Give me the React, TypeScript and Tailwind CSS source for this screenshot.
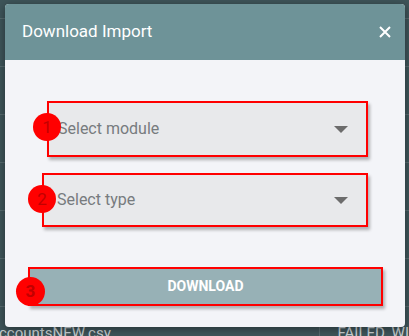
import React from 'react'

const rows = [0, 1, 2, 3, 4, 5]

function Marker({ n, className }: { n: number; className: string }) {
  return (
    <div
      className={`absolute flex h-[28px] w-[28px] items-center justify-center rounded-full bg-[#ff0000] text-[17px] leading-none text-[#c20000] ${className}`}
    >
      {n}
    </div>
  )
}

function SelectField({ label, className, marker }: { label: string; className: string; marker: React.ReactNode }) {
  return (
    <div
      className={`relative flex items-center justify-between border-2 border-[#ff0000] bg-[#e8e9eb] pr-[18px] shadow-[2px_3px_3px_rgba(0,0,0,0.28)] ${className}`}
    >
      {marker}
      <span className="text-[16px] text-[#777b7e]">{label}</span>
      <span className="h-0 w-0 border-x-[7px] border-t-[7px] border-x-transparent border-t-[#6c6c6c]" />
    </div>
  )
}

export default function App() {
  return (
    <div className="relative h-[336px] w-[409px] overflow-hidden bg-[#3e5459] font-['Roboto','Liberation_Sans',sans-serif]">
      {/* table behind the modal */}
      <div className="flex flex-col">
        <div className="h-[19px] border-b border-[#566a6e]" />
        {rows.map((r) => (
          <div key={r} className="flex h-[48px] border-b border-[#566a6e]">
            <div className="w-[323px] border-r border-[#566a6e]" />
          </div>
        ))}
        <div className="flex h-[40px] items-start text-[15px] leading-none text-[#c9d1d3]">
          <span className="-ml-[1px] w-[323px] border-r border-[#566a6e] pt-[19px]">ccountsNEW.csv</span>
          <span className="pl-[17px] pt-[19px]">FAILED_WI</span>
        </div>
      </div>

      {/* modal */}
      <div className="absolute left-[5px] top-[4px] flex h-[323px] w-[400px] flex-col overflow-hidden rounded-[4px] bg-[#f3f4f8] shadow-[0_2px_8px_rgba(0,0,0,0.4)]">
        <div className="flex h-[56px] items-center justify-between bg-[#6e9398] pl-[17px] pr-[14px]">
          <h2 className="text-[17px] text-white">Download Import</h2>
          <svg width="12" height="12" viewBox="0 0 12 12" className="text-white">
            <path d="M1 1 L11 11 M11 1 L1 11" stroke="currentColor" strokeWidth="2" />
          </svg>
        </div>

        <div className="flex flex-col pt-[41px]">
          <SelectField
            label="Select module"
            className="ml-[42px] mr-[37px] h-[56px] pl-[9px]"
            marker={<Marker n={1} className="-left-[16px] top-[10px]" />}
          />
          <SelectField
            label="Select type"
            className="ml-[37px] mr-[37px] mt-[16px] h-[54px] pl-[13px]"
            marker={<Marker n={2} className="-left-[16px] top-[10px]" />}
          />
          <button className="relative ml-[23px] mr-[22px] mt-[40px] flex h-[39px] items-center justify-center border-2 border-[#ff0000] bg-[#97b1b6] text-[14px] font-bold text-white shadow-[2px_3px_3px_rgba(0,0,0,0.28)]">
            <Marker n={3} className="-left-[14px] top-[8px] h-[29px] w-[29px]" />
            DOWNLOAD
          </button>
        </div>
      </div>
    </div>
  )
}
